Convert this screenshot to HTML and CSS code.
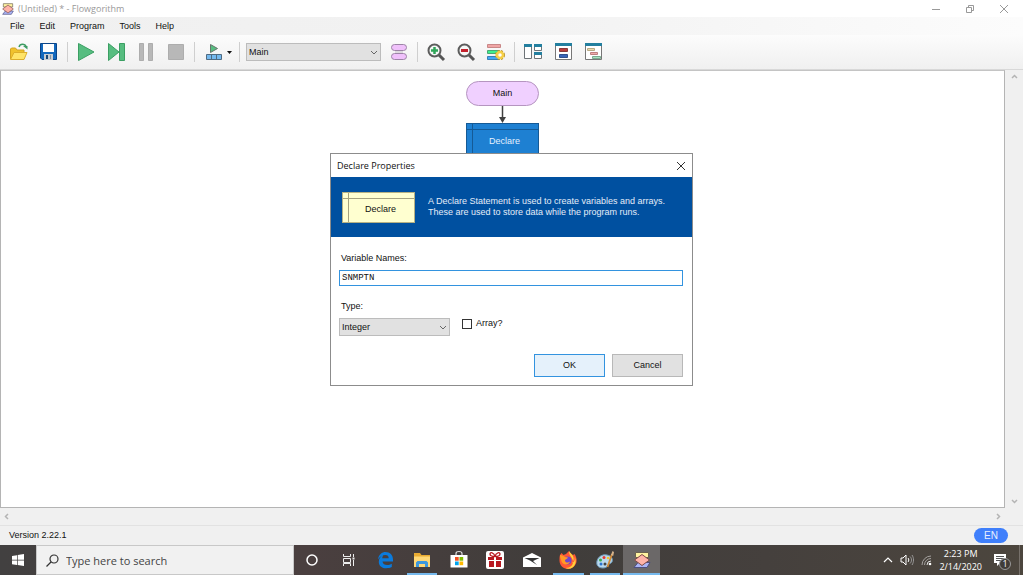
FILE: index.html
```html
<!DOCTYPE html>
<html lang="en">
<head>
    <meta charset="UTF-8">
    <meta name="viewport" content="width=device-width, initial-scale=1.0">
    <title>(Untitled) * - Flowgorithm</title>
    <link rel="stylesheet" href="styles.css">
</head>
<body>
    <header class="titlebar">
        <svg class="app-icon" width="12" height="12" viewBox="0 0 18 18">
            <path d="M2 1h14v5H2z" fill="#fff3a0" stroke="#6b6250"/>
            <path d="M5 12h12l-3 5H1z" fill="#aab4f5" stroke="#4d4f80"/>
            <path d="M9 3l8 6-8 6-8-6z" fill="#ffb3a8" stroke="#7d4a48"/>
        </svg>
        <span class="title">(Untitled) * - Flowgorithm</span>
        <div class="window-buttons">
            <button aria-label="Minimize"><svg width="10" height="10" viewBox="0 0 10 10"><path d="M1 5.500h8"/></svg></button>
            <button aria-label="Restore"><svg width="10" height="10" viewBox="0 0 10 10"><path d="M1.500 3.500h5v5h-5zM3.500 3V1.500h5v5H7"/></svg></button>
            <button aria-label="Close"><svg width="10" height="10" viewBox="0 0 10 10"><path d="M1 1l8 8M9 1l-8 8"/></svg></button>
        </div>
    </header>

    <nav class="menubar">
        <a href="#">File</a>
        <a href="#">Edit</a>
        <a href="#">Program</a>
        <a href="#">Tools</a>
        <a href="#">Help</a>
    </nav>

    <div class="toolbar">
        <button aria-label="Open">
            <svg width="20" height="20" viewBox="0 0 20 20">
                <path d="M1.500 17V7l1-1h4l1.500 2h7v3" fill="#f0c22c" stroke="#d3a422"/>
                <path d="M1.500 17.500L5 10.500h13l-3 7z" fill="#ffe468" stroke="#dcae2c"/>
                <path d="M10 5c1-4 6-3.500 7-.5" fill="none" stroke="#3d9b62" stroke-width="1.500"/>
                <path d="M14 4h4.500v3.500z" fill="#3d9b62"/>
            </svg>
        </button>
        <button aria-label="Save">
            <svg width="20" height="20" viewBox="0 0 20 20">
                <path d="M1.500 1.500h16v16H3L1.500 16z" fill="#1268bd" stroke="#0b4588"/>
                <path d="M4 2h11v8H4z" fill="#fff"/>
                <path d="M5 12h9v6H5z" fill="#c6ccd2"/>
                <path d="M7 13h2v4H7z" fill="#174575"/>
                <path d="M11 13h1v4h-1z" fill="#8894a0"/>
            </svg>
        </button>
        <span class="separator"></span>
        <button aria-label="Run">
            <svg width="20" height="20" viewBox="0 0 20 20"><path d="M2.500 1.500v17L18 10z" fill="#57bd80" stroke="#3b9f63"/></svg>
        </button>
        <button aria-label="Step">
            <svg width="20" height="20" viewBox="0 0 20 20"><path d="M2.500 1.500v17L13 10zM13.500 1.500h5v17h-5z" fill="#57bd80" stroke="#3b9f63"/></svg>
        </button>
        <button aria-label="Pause">
            <svg width="20" height="20" viewBox="0 0 20 20"><path d="M3.500 1.500h4v17h-4zM12.500 1.500h4v17h-4z" fill="#b8b8b8" stroke="#adadad"/></svg>
        </button>
        <button aria-label="Stop">
            <svg width="20" height="20" viewBox="0 0 20 20"><path d="M2.500 2.500h15v15h-15z" fill="#b8b8b8" stroke="#adadad"/></svg>
        </button>
        <span class="separator"></span>
        <button class="split" aria-label="Run speed">
            <svg width="30" height="20" viewBox="0 0 30 20">
                <path d="M8.500 2.500v8l7-4z" fill="#57bd80" stroke="#66756c"/>
                <path d="M4.500 12.500h15v5h-15zM9.500 12.500v5M14.500 12.500v5" fill="#75b9ee" stroke="#506b82"/>
                <path d="M25 9h5l-2.500 3z" fill="#111"/>
            </svg>
        </button>
        <span class="separator"></span>
        <select class="drop function-list" aria-label="Function">
            <option>Main</option>
        </select>
        <button aria-label="Functions">
            <svg width="20" height="20" viewBox="0 0 20 20">
                <rect x="2.500" y="2.500" width="15" height="6" rx="3" fill="#f0c1fb" stroke="#9c84a6"/>
                <rect x="2.500" y="11.500" width="15" height="6" rx="3" fill="#f0c1fb" stroke="#9c84a6"/>
                <path d="M6 10h8" stroke="#c5bcc8"/>
            </svg>
        </button>
        <span class="separator"></span>
        <button aria-label="Zoom in">
            <svg width="20" height="20" viewBox="0 0 20 20">
                <path d="M13 13l5 5" stroke="#555" stroke-width="3"/>
                <circle cx="8.500" cy="8.500" r="6" fill="#f5f7f6" stroke="#5c5c5c" stroke-width="2"/>
                <path d="M8.500 5v7M5 8.500h7" stroke="#2ea558" stroke-width="2.500"/>
            </svg>
        </button>
        <button aria-label="Zoom out">
            <svg width="20" height="20" viewBox="0 0 20 20">
                <path d="M13 13l5 5" stroke="#555" stroke-width="3"/>
                <circle cx="8.500" cy="8.500" r="6" fill="#f5f7f6" stroke="#5c5c5c" stroke-width="2"/>
                <path d="M5 8.500h7" stroke="#c3202c" stroke-width="3"/>
            </svg>
        </button>
        <button aria-label="Chart style">
            <svg width="20" height="20" viewBox="0 0 20 20">
                <path d="M1.500 2.500h13v3h-13z" fill="#f0a5a5" stroke="#c98787"/>
                <path d="M1.500 8.500h12v3h-12z" fill="#3df08d" stroke="#4aa674"/>
                <path d="M1.500 14.500h12v3h-12z" fill="#43a8f5" stroke="#397fb5"/>
                <circle cx="14" cy="13" r="4" fill="none" stroke="#b8912b" stroke-width="2" stroke-dasharray="2 1.200"/>
                <circle cx="14" cy="13" r="3" fill="#fff" stroke="#f5cf47" stroke-width="2.500"/>
            </svg>
        </button>
        <span class="separator"></span>
        <button aria-label="Layout">
            <svg width="20" height="20" viewBox="0 0 20 20">
                <path d="M1.500 3.500h7v13h-7zM11.500 3.500h7v5h-7zM11.500 11.500h7v5h-7z" fill="#fff" stroke="#6d7377"/>
                <path d="M1 2h8v3H1zM11 2h8v3h-8zM11 10h8v3h-8z" fill="#237f9f"/>
            </svg>
        </button>
        <button aria-label="Variable watch">
            <svg width="20" height="20" viewBox="0 0 20 20">
                <path d="M2.500 2.500h16v15h-16z" fill="#fff" stroke="#777"/>
                <path d="M2 1h17v3H2z" fill="#237f9f"/>
                <path d="M6.500 6.500h8v3h-8z" fill="#b83c3c" stroke="#873a3a"/>
                <path d="M6.500 12.500h8v3h-8z" fill="#3865b9" stroke="#31508c"/>
            </svg>
        </button>
        <button aria-label="Console">
            <svg width="20" height="20" viewBox="0 0 20 20">
                <path d="M2.500 2.500h16v15h-16z" fill="#fff" stroke="#777"/>
                <path d="M2 1h17v3H2z" fill="#237f9f"/>
                <path d="M4.500 6.500h7v2h-7z" fill="#e7dab0" stroke="#b8aa84"/>
                <path d="M7.500 10.500h7v2h-7z" fill="#f0aaaa" stroke="#bf8080"/>
                <path d="M9.500 14.500h8v2h-8z" fill="#a8e2c0" stroke="#7aaa8e"/>
            </svg>
        </button>
    </div>

    <main class="workspace">
        <section class="chart">
            <div class="terminal">Main</div>
            <svg class="arrow" width="9" height="17" viewBox="0 0 9 17">
                <path d="M4.500 0v12" stroke="#404040" stroke-width="1.500"/>
                <path d="M1 11h7l-3.500 6z" fill="#404040"/>
            </svg>
            <div class="declare selected">Declare</div>
        </section>
        <div class="scroll vertical">
            <svg width="7" height="5" viewBox="0 0 7 5"><path d="M1 4l2.500-2.500L6 4"/></svg>
            <svg width="7" height="5" viewBox="0 0 7 5"><path d="M1 1l2.500 2.500L6 1"/></svg>
        </div>
    </main>
    <div class="scroll horizontal">
        <svg width="5" height="7" viewBox="0 0 5 7"><path d="M4 1L1.500 3.500 4 6"/></svg>
        <svg width="5" height="7" viewBox="0 0 5 7"><path d="M1 1l2.500 2.500L1 6"/></svg>
    </div>

    <div class="statusbar">
        <span>Version 2.22.1</span>
        <span class="language">EN</span>
    </div>

    <form class="dialog" role="dialog" aria-labelledby="dialog-title">
        <div class="dialog-title">
            <span id="dialog-title">Declare Properties</span>
            <button type="button" aria-label="Close dialog"><svg width="10" height="10" viewBox="0 0 10 10"><path d="M1 1l8 8M9 1l-8 8"/></svg></button>
        </div>
        <div class="banner">
            <div class="declare sample">Declare</div>
            <p>A Declare Statement is used to create variables and arrays.<br>These are used to store data while the program runs.</p>
        </div>
        <div class="fields">
            <label for="names">Variable Names:</label>
            <input type="text" id="names" value="SNMPTN">
            <label for="type">Type:</label>
            <div class="type-row">
                <select class="drop" id="type">
                    <option>Integer</option>
                </select>
                <input type="checkbox" id="array">
                <label for="array">Array?</label>
            </div>
            <div class="actions">
                <button type="button" class="primary">OK</button>
                <button type="button">Cancel</button>
            </div>
        </div>
    </form>

    <footer class="taskbar">
        <button class="start" aria-label="Start">
            <svg width="12" height="12" viewBox="0 0 12 12"><path d="M0 2l5-.8v4.500H0zM5.700 1L12 0v5.700H5.700zM0 6.400h5v4.500L0 10.200zM5.700 6.400H12V12l-6.300-1z" fill="#fff"/></svg>
        </button>
        <div class="search">
            <svg width="13" height="13" viewBox="0 0 13 13"><circle cx="8" cy="5" r="4" fill="none" stroke="#333" stroke-width="1.200"/><path d="M5 8l-4.500 4.500" stroke="#333" stroke-width="1.200"/></svg>
            <input type="text" placeholder="Type here to search" aria-label="Search">
        </div>
        <div class="apps">
            <button aria-label="Cortana">
                <svg width="20" height="20" viewBox="0 0 20 20"><circle cx="10" cy="10" r="5" fill="none" stroke="#fff" stroke-width="1.500"/></svg>
            </button>
            <button aria-label="Task view">
                <svg width="20" height="20" viewBox="0 0 20 20" fill="none" stroke="#eee"><path d="M4.500 4v2.500h7V4M4.500 8.500h7v4h-7zM4.500 16v-2.500h7V16M14.500 4v3M14.500 10v6"/><path d="M13.500 8.500h2" stroke-width="2"/></svg>
            </button>
            <button aria-label="Edge">
                <svg width="20" height="20" viewBox="0 0 20 20"><path d="M3 9.500C3.600 4.500 7 2 10.500 2c4.500 0 7.500 3 7.500 7.800v1.700H7.500c.2 2.400 2.300 3.500 4.700 3.500 1.700 0 3.200-.5 4.600-1.300v3.400c-1.500.8-3.400 1.200-5.300 1.200-4.800 0-7.700-2.500-7.700-6.600 0-3 1.700-5.400 4.500-6.500-.7.900-1 1.900-1.100 3h6.500c0-2.100-1-3.300-3.300-3.300C7.400 4.900 4.800 6.500 3 9.500z" fill="#0b7bdc"/></svg>
            </button>
            <button class="running" aria-label="File Explorer">
                <svg width="20" height="20" viewBox="0 0 20 20"><path d="M2 3h6l1.500 2H18v12H2z" fill="#e9ab32"/><path d="M2 6.500h16V17H2z" fill="#ffd877"/><path d="M4 17v-4.500l1.500-1.500h9l1.500 1.500V17h-3v-3H7v3z" fill="#3d99df"/></svg>
            </button>
            <button aria-label="Store">
                <svg width="20" height="20" viewBox="0 0 20 20"><path d="M7 6V3.500C7 2 8 1.500 10 1.500s3 .5 3 2V6" fill="none" stroke="#ddd" stroke-width="1.200"/><path d="M1.500 5h17v12.500h-17z" fill="#fff"/><path d="M6 7h3.700v3.700H6z" fill="#f25022"/><path d="M10.500 7h3.700v3.700h-3.700z" fill="#7fba00"/><path d="M6 11.500h3.700v3.700H6z" fill="#00a4ef"/><path d="M10.500 11.500h3.700v3.700h-3.700z" fill="#ffb900"/></svg>
            </button>
            <button aria-label="Gifts">
                <svg width="20" height="20" viewBox="0 0 20 20"><rect x="1" y="1" width="18" height="18" rx="2" fill="#fff"/><path d="M3 7h6v3H3zM11 7h6v3h-6zM4 11h5v6H4zM11 11h5v6h-5z" fill="#b81820"/><path d="M10 6.500C8 6.500 5 6 5 4s4-2 5 2.500C11 2 15 2 15 4s-3 2.500-5 2.500z" fill="none" stroke="#b81820" stroke-width="1.300"/></svg>
            </button>
            <button aria-label="Mail">
                <svg width="20" height="20" viewBox="0 0 20 20"><path d="M1 7.500L10 3l9 4.500V17H1z" fill="#fff"/><path d="M2.500 8h15L11 11l4 4-7-4.500z" fill="#333"/></svg>
            </button>
            <button class="running" aria-label="Firefox">
                <svg width="20" height="20" viewBox="0 0 20 20"><path d="M2 5l1.500-2 2 2L8 4l3-3c1 2 2 2.500 4 4l1.500-1C18 6 19 9 18.500 12c-1 4-4.500 7-8.500 7-5 0-8.500-4-8.500-8.500C1.500 8 1.500 7 2 5z" fill="#ff5735"/><path d="M11 1c1 2 3 3 4 5 1 2 1 5-1 7 3-1 3-4 2.500-6 2 3 1.500 8-2 10.500-2 1.400-5 1.500-7 .5 5 0 8-3 7.500-7C14.500 7.500 11 6 11 1z" fill="#ffd03b"/><circle cx="9.500" cy="10.500" r="4" fill="#7046cc"/><path d="M2 5c2 0 4 1 5 2l3 .5c-1 2-3 1.500-3 3 0 2 3 3 5 1-1 4-7 4-8.500 0C3 9 2 8 2 5z" fill="#ff9a25"/></svg>
            </button>
            <button class="running" aria-label="Paint">
                <svg width="20" height="20" viewBox="0 0 20 20"><path d="M2 11c1-4 5-7 10-6 5 1 6 4 5 7-1 2-3 1-4 3s-2 3-5 3c-5 0-7-3-6-7z" fill="#b9d8ee" stroke="#6d9ab9"/><circle cx="5.500" cy="10" r="1.500" fill="#3dab4d"/><circle cx="9" cy="7.500" r="1.500" fill="#e33b31"/><circle cx="6" cy="14" r="1.500" fill="#2974d1"/><circle cx="13" cy="8" r="1.300" fill="#f3c52e"/><circle cx="10" cy="14" r="1.500" fill="#444"/><path d="M17 4l-4.500 13" stroke="#d18a37" stroke-width="1.800"/><path d="M16 5l1.500-4L19 2l-.8 4z" fill="#d7b48c"/></svg>
            </button>
            <button class="running active" aria-label="Flowgorithm">
                <svg width="20" height="20" viewBox="0 0 20 20"><path d="M3.500 2.500h13v5h-13z" fill="#fff3a0" stroke="#6b6250"/><path d="M6 12.500h12l-3 5H2z" fill="#aab4f5" stroke="#4d4f80"/><path d="M10 4.500l7.500 5.500-7.500 5.500L2.500 10z" fill="#ffb3a8" stroke="#7d4a48"/></svg>
            </button>
        </div>
        <div class="tray">
            <svg width="10" height="10" viewBox="0 0 10 10"><path d="M1 7l4-4 4 4" fill="none" stroke="#fff" stroke-width="1.200"/></svg>
            <svg width="14" height="12" viewBox="0 0 14 12" fill="none"><path d="M1 4h2l3-3v10L3 8H1z" stroke="#fff"/><path d="M8 4c1 1 1 3 0 4" stroke="#fff"/><path d="M10 2.500c2 2 2 5 0 7M12 1c2 3 2 7 0 10" stroke="#999"/></svg>
            <svg width="11" height="11" viewBox="0 0 11 11" fill="none"><path d="M1 10A9 9 0 0 1 10 1M3.500 10A6.500 6.500 0 0 1 10 3.500" stroke="#a5a2a0"/><path d="M6 10a4 4 0 0 1 4-4" stroke="#ddd"/><circle cx="9" cy="9" r="1.300" fill="#fff"/></svg>
            <time class="clock" datetime="2020-02-14T14:23">2:23 PM<br>2/14/2020</time>
            <button class="notifications" aria-label="1 notification">
                <svg width="14" height="14" viewBox="0 0 14 14"><path d="M1 1h12v9H7l-3 3v-3H1z" fill="#fff"/><path d="M3 3.500h8M3 5.500h8M3 7.500h5" stroke="#555"/></svg>
                <span class="badge">1</span>
            </button>
        </div>
    </footer>
</body>
</html>
```

FILE: styles.css
```css
* {
    box-sizing: border-box;
}
body {
    margin: 0;
    min-height: 100vh;
    display: flex;
    flex-direction: column;
    position: relative;
    font-family: "Liberation Sans", Arial, sans-serif;
    font-size: 9px;
    line-height: 11px;
    color: #111;
    background-color: #f0f0f0;
}
button, input, select {
    font: inherit;
    color: inherit;
    margin: 0;
}
button {
    display: flex;
    align-items: center;
    justify-content: center;
    padding: 0;
    border: none;
    background: none;
}
svg {
    flex: none;
}

/* window frame */
.titlebar {
    display: flex;
    align-items: center;
    height: 17px;
    padding: 0 2px;
    background-color: #fff;
    color: #999;
    font-family: "Open Sans", sans-serif;
}
.title {
    padding-left: 4px;
}
.window-buttons {
    display: flex;
    margin-left: auto;
}
.window-buttons button {
    width: 34px;
    height: 16px;
}
.window-buttons path {
    fill: none;
    stroke: #999;
}
.menubar {
    display: flex;
    align-items: center;
    gap: 15px;
    height: 18px;
    padding: 0 10px;
    background: linear-gradient(to right, #f0f0f0, #f2f2f2 50%, #fcfcfc);
}
.menubar a {
    color: #111;
    text-decoration: none;
}
.toolbar {
    display: flex;
    align-items: center;
    height: 35px;
    padding-left: 4px;
    background: linear-gradient(#fcfcfc, #f0f0f0);
    border-bottom: 1px solid #d8d8d8;
}
.toolbar button {
    width: 30px;
    height: 30px;
}
.toolbar .split {
    width: 38px;
}
.separator {
    width: 1px;
    height: 20px;
    margin: 0 3px;
    background-color: #cfcfcf;
}
.drop {
    appearance: none;
    height: 18px;
    padding: 0 2px;
    border: 1px solid #bcbcbc;
    border-radius: 0;
    background: #e1e1e1 url("data:image/svg+xml,%3Csvg xmlns='http://www.w3.org/2000/svg' width='8' height='5'%3E%3Cpath d='M1 1l3 3 3-3' fill='none' stroke='%23666'/%3E%3C/svg%3E") no-repeat right 2px center;
}
.function-list {
    width: 135px;
    margin: 0 3px;
}

/* flowchart */
.workspace {
    display: flex;
    flex: 1;
}
.chart {
    flex: 1;
    display: flex;
    flex-direction: column;
    align-items: center;
    padding-top: 10px;
    background-color: #fff;
    border: 1px solid #b4b4b4;
    border-top-color: #c4c4c4;
}
.terminal {
    display: flex;
    align-items: center;
    justify-content: center;
    width: 73px;
    height: 25px;
    border: 1px solid #b595c0;
    border-radius: 13px;
    background-color: #f0d0ff;
}
.declare {
    display: flex;
    align-items: center;
    justify-content: center;
    flex: none;
    width: 73px;
    height: 31px;
    border: 1px solid;
    padding: 5px 0 0 4px;
}
.selected {
    color: #e4f1ff;
    border-color: #155a96;
    background: linear-gradient(#155a96, #155a96) 5px 0 / 1px 100% no-repeat,
        linear-gradient(#155a96, #155a96) 0 5px / 100% 1px no-repeat, #1e80d2;
}
.sample {
    color: #111;
    border-color: #b5b184;
    background: linear-gradient(#a5a27e, #a5a27e) 5px 0 / 1px 100% no-repeat,
        linear-gradient(#a5a27e, #a5a27e) 0 5px / 100% 1px no-repeat, #ffffd0;
}
.scroll {
    display: flex;
    align-items: center;
    justify-content: space-between;
    background-color: #f0f0f0;
}
.scroll path {
    fill: none;
    stroke: #b4b4b4;
    stroke-width: 1.5;
}
.vertical {
    flex-direction: column;
    width: 18px;
    padding: 4px 0;
}
.horizontal {
    height: 17px;
    padding: 0 22px 0 4px;
}
.statusbar {
    display: flex;
    align-items: center;
    justify-content: space-between;
    height: 20px;
    padding: 0 15px 0 9px;
    border-top: 1px solid #e2e2e2;
}
.language {
    width: 34px;
    border-radius: 8px;
    background-color: #3f7ffb;
    color: #e8f0ff;
    font-size: 10px;
    line-height: 15px;
    text-align: center;
}

/* declare dialog, floats over the chart */
.dialog {
    position: absolute;
    top: 153px;
    left: 0;
    right: 0;
    width: 363px;
    margin: 0 auto;
    border: 1px solid #8c8c8c;
    background-color: #fff;
}
.dialog-title {
    display: flex;
    align-items: center;
    justify-content: space-between;
    height: 23px;
    padding: 0 6px;
    font-family: "Open Sans", sans-serif;
}
.dialog-title path {
    stroke: #333;
}
.banner {
    display: flex;
    align-items: center;
    gap: 13px;
    height: 60px;
    padding-left: 11px;
    background-color: #0050a0;
    color: #e4edf8;
}
.banner p {
    margin: 0;
}
.fields {
    display: flex;
    flex-direction: column;
    padding: 16px 9px 8px 8px;
}
.fields > label {
    padding-left: 2px;
}
.fields input[type="text"] {
    height: 16px;
    margin: 6px 0 15px;
    padding: 0 2px;
    border: 1px solid #3393df;
    outline: none;
    font-family: "Liberation Mono", "Courier New", monospace;
}
.type-row {
    display: flex;
    align-items: flex-start;
    margin-top: 6px;
}
.type-row .drop {
    width: 111px;
}
.type-row input {
    appearance: none;
    width: 10px;
    height: 10px;
    margin: 1px 4px 0 12px;
    border: 1px solid #333;
    background-color: #fff;
}
.actions {
    display: flex;
    justify-content: flex-end;
    gap: 7px;
    margin-top: 18px;
}
.actions button {
    width: 71px;
    height: 23px;
    border: 1px solid #b8b8b8;
    background-color: #e1e1e1;
}
.actions .primary {
    border-color: #3393df;
    background-color: #e5f1fb;
}

/* taskbar */
.taskbar {
    display: flex;
    height: 30px;
    background: linear-gradient(to right, #424040, #4a3f3f 30%, #403d3b 55%, #45403d 75%, #4c463e);
    color: #fff;
    font-family: "Open Sans", sans-serif;
}
.start {
    width: 36px;
}
.search {
    display: flex;
    align-items: center;
    gap: 7px;
    width: 258px;
    padding-left: 9px;
    border: 1px solid #c8c8c8;
    background-color: #f1f1f1;
}
.search input {
    flex: 1;
    min-width: 0;
    padding: 0;
    border: none;
    outline: none;
    background: none;
    font-size: 11px;
}
.search input::placeholder {
    color: #444;
    opacity: 1;
}
.apps {
    display: grid;
    grid-template-columns: repeat(10, 1fr);
    width: 366px;
}
.apps button {
    border-bottom: 2px solid transparent;
    padding-top: 2px;
    margin: 0 3px;
}
.apps .running {
    border-color: #76b9ed;
}
.apps .active {
    margin: 0;
    background-color: #6b6868;
}
.tray {
    display: flex;
    align-items: center;
    gap: 7px;
    margin-left: auto;
    margin-right: 3px;
    padding-right: 8px;
    border-right: 1px solid #77716b;
}
.clock {
    line-height: 13px;
    text-align: center;
}
.notifications {
    position: relative;
    width: 18px;
    height: 20px;
    margin-left: 4px;
    justify-content: flex-start;
}
.badge {
    position: absolute;
    right: 0;
    bottom: 0;
    width: 12px;
    border: 1px solid #999;
    border-radius: 6px;
    background-color: #403c38;
    line-height: 10px;
}
```
